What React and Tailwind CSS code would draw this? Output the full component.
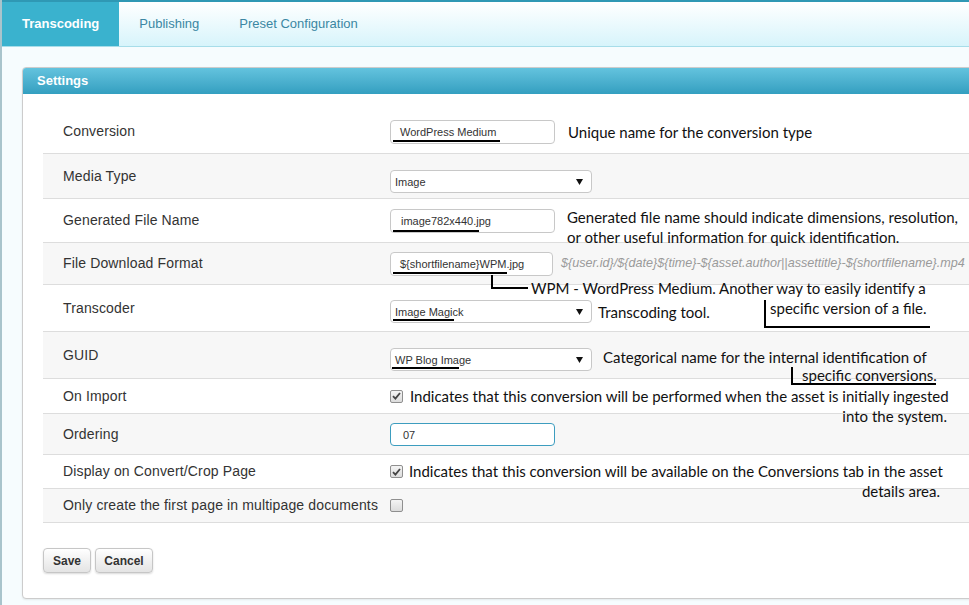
import React from "react";

const sans = { fontFamily: '"Liberation Sans", Arial, sans-serif' };
const note = "font-['Lato',sans-serif] text-[15px] text-[#111] leading-[20px] whitespace-nowrap";

function Arrow() {
  return (
    <svg width="7" height="6" viewBox="0 0 7 6" className="absolute right-[8px] top-[8px]">
      <path d="M0 0 H7 L3.5 6 Z" fill="#111" />
    </svg>
  );
}

function Check({ checked }) {
  return (
    <span className="relative inline-flex h-[13px] w-[13px] shrink-0 items-center justify-center rounded-[2px] border border-[#8f8f8f] bg-gradient-to-b from-[#f4f4f4] to-[#dcdcdc]">
      {checked && (
        <svg width="9" height="8" viewBox="0 0 9 8">
          <path d="M1 4.2 L3.4 6.6 L8 1" fill="none" stroke="#444" strokeWidth="1.8" />
        </svg>
      )}
    </span>
  );
}

function Mark({ left, width, top }) {
  return <span className="absolute h-[2px] bg-black" style={{ left, width, top }} />;
}

export default function App() {
  const row = "relative flex items-center border-b border-[#dddddd]";
  const label = "w-[347px] shrink-0 pl-5 text-[14px] tracking-[0.14px] text-[#333]";
  const box = "relative flex items-center rounded-[4px] border bg-white text-[11px] text-[#333]";

  return (
    <div className="h-[605px] w-[969px] overflow-hidden border-l-2 border-[#a9c4cc] bg-[#f6fcfe]" style={sans}>
      <div className="h-[2px] bg-[#2f98b4]" />
      <div className="flex h-[45px] border-b border-[#a7dde9] bg-gradient-to-b from-white to-[#d7f4fb] text-[13px]">
        <div className="flex items-center bg-[#3ab2ce] px-5 font-bold text-white">Transcoding</div>
        <div className="flex items-center px-5 text-[#3b87a3]">Publishing</div>
        <div className="flex items-center px-5 text-[#3b87a3]">Preset Configuration</div>
      </div>

      <div className="ml-[20px] mt-[20px] w-[1000px] rounded-[4px] border border-[#cccccc] bg-white shadow-[0_1px_2px_rgba(0,0,0,0.08)]">
        <div className="flex h-[26px] items-center rounded-t-[3px] bg-gradient-to-b from-[#63c3de] to-[#339fc0] pl-[14px] text-[13px] font-bold text-white">
          Settings
        </div>

        <div className="px-5 pb-[25px] pt-[16px]">
          <div>
            <div className={`${row} h-[44px] bg-white`}>
              <div className={label}>Conversion</div>
              <div className={`${box} h-[24px] w-[165px] border-[#c8c8c8] pl-[9px] pt-[2px]`}>
                WordPress Medium
                <Mark left={2} width={107} top={19} />
              </div>
              <span className={`${note} ml-[13px]`}>Unique name for the conversion type</span>
            </div>

            <div className={`${row} h-[45px] bg-[#f7f7f7]`}>
              <div className={label}>Media Type</div>
              <div className={`${box} mt-[10px] h-[23px] w-[202px] rounded-[3px] border-[#c8c8c8] pl-[4px] pt-[2px]`}>
                Image
                <Arrow />
              </div>
            </div>

            <div className={`${row} h-[44px] bg-white`}>
              <div className={label}>Generated File Name</div>
              <div className={`${box} h-[24px] w-[165px] border-[#c8c8c8] pl-[10px] pt-[2px]`}>
                image782x440.jpg
                <Mark left={2} width={86} top={20} />
              </div>
              <div className={`${note} absolute left-[524px] top-[8px] z-10`}>
                <div>Generated file name should indicate dimensions, resolution,</div>
                <div>or other useful information for quick identification.</div>
              </div>
            </div>

            <div className={`${row} h-[42px] bg-[#f7f7f7]`}>
              <div className={label}>File Download Format</div>
              <div className={`${box} h-[24px] w-[163px] border-[#c8c8c8] pl-[9px] pt-[2px]`}>
                {"${shortfilename}WPM.jpg"}
                <Mark left={2} width={114} top={19} />
              </div>
              <span className="ml-[8px] whitespace-nowrap text-[12.6px] italic text-[#9a9a9a]">
                {"${user.id}/${date}${time}-${asset.author||assettitle}-${shortfilename}.mp4"}
              </span>
              <span className="absolute left-[448px] top-[32px] z-10 h-[14px] w-[2px] bg-black" />
              <span className="absolute left-[448px] top-[44px] z-10 h-[2px] w-[37px] bg-black" />
              <span className={`${note} absolute left-[488px] top-[35px] z-10`}>
                WPM - WordPress Medium. Another way to easily identify a
              </span>
              <span className={`${note} absolute left-[727px] top-[55px] z-10`}>specific version of a file.</span>
              <span className="absolute left-[721px] top-[57px] z-10 h-[27px] w-[2px] bg-black" />
              <span className="absolute left-[721px] top-[83px] z-10 h-[2px] w-[166px] bg-black" />
            </div>

            <div className={`${row} h-[47px] bg-white`}>
              <div className={label}>Transcoder</div>
              <div className={`${box} mt-[7px] h-[23px] w-[202px] rounded-[3px] border-[#c8c8c8] pl-[4px] pt-[2px]`}>
                Image Magick
                <Mark left={2} width={61} top={18} />
                <Arrow />
              </div>
              <span className={`${note} ml-[6px] mt-[7px]`}>Transcoding tool.</span>
            </div>

            <div className={`${row} h-[47px] bg-[#f7f7f7]`}>
              <div className={label}>GUID</div>
              <div className={`${box} mt-[8px] h-[23px] w-[202px] rounded-[3px] border-[#c8c8c8] pl-[4px] pt-[2px]`}>
                WP Blog Image
                <Mark left={1} width={67} top={18} />
                <Arrow />
              </div>
              <span className={`${note} ml-[11px] mt-[4px]`}>Categorical name for the internal identification of</span>
              <span className={`${note} absolute left-[759px] top-[33px] z-10`}>specific conversions.</span>
              <span className="absolute left-[748px] top-[35px] z-10 h-[18px] w-[2px] bg-black" />
              <span className="absolute left-[748px] top-[51px] z-10 h-[2px] w-[145px] bg-black" />
            </div>

            <div className={`${row} h-[35px] bg-white`}>
              <div className={label}>On Import</div>
              <Check checked />
              <div className={`${note} absolute left-[367px] top-[7px] z-10 w-[537px]`}>
                <div>Indicates that this conversion will be performed when the asset is initially ingested</div>
                <div className="text-right">into the system.</div>
              </div>
            </div>

            <div className={`${row} h-[41px] bg-[#f7f7f7]`}>
              <div className={label}>Ordering</div>
              <div className={`${box} h-[23px] w-[165px] border-[#3d9dbf] pl-[12px] pt-[2px]`}>07</div>
            </div>

            <div className={`${row} h-[34px] bg-white`}>
              <div className={label}>Display on Convert/Crop Page</div>
              <Check checked />
              <div className={`${note} absolute left-[366px] top-[6px] z-10 w-[531px]`}>
                <div>Indicates that this conversion will be available on the Conversions tab in the asset</div>
                <div className="text-right">details area.</div>
              </div>
            </div>

            <div className={`${row} h-[34px] bg-[#f7f7f7]`}>
              <div className={label}>Only create the first page in multipage documents</div>
              <Check />
            </div>
          </div>

          <div className="mt-[25px] flex gap-[4px]">
            <button className="h-[25px] w-[48px] rounded-[4px] border border-[#c6c6c6] bg-gradient-to-b from-white to-[#e4e4e4] text-[12px] font-bold text-[#333] shadow-[0_1px_2px_rgba(0,0,0,0.15)]">
              Save
            </button>
            <button className="h-[25px] w-[58px] rounded-[4px] border border-[#c6c6c6] bg-gradient-to-b from-white to-[#e4e4e4] text-[12px] font-bold text-[#333] shadow-[0_1px_2px_rgba(0,0,0,0.15)]">
              Cancel
            </button>
          </div>
        </div>
      </div>
    </div>
  );
}
